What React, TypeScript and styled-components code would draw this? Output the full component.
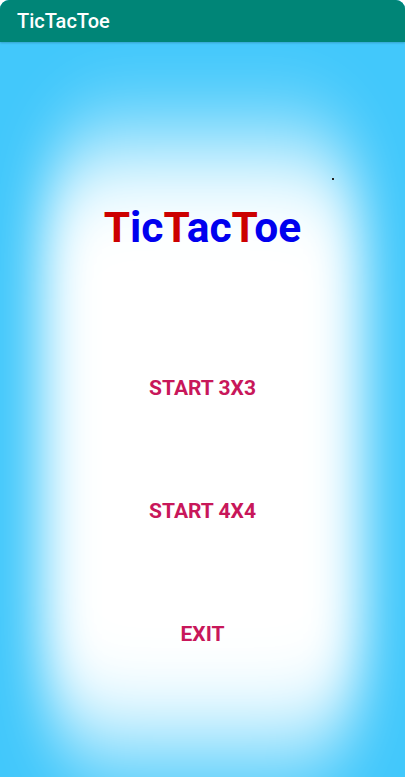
import React from "react";
import styled, { createGlobalStyle } from "styled-components";

const Global = createGlobalStyle`
  html, body { margin: 0; padding: 0; background: #ffffff; }
  body { font-family: Roboto, "Noto Sans", sans-serif; width: 405px; height: 777px; overflow: hidden; }
`;

const Screen = styled.div`
  width: 405px;
  height: 777px;
  display: flex;
  flex-direction: column;
  background: #42c8fb;
  border-radius: 9px 9px 0 0;
  overflow: hidden;
`;

const AppBar = styled.header`
  height: 42px;
  flex: none;
  background: #008577;
  display: flex;
  align-items: center;
  padding-left: 17px;
  color: #ffffff;
  font-size: 20px;
  font-weight: 500;
  box-shadow: 0 1px 2px rgba(0, 0, 0, 0.2);
  z-index: 2;
`;

const Main = styled.main`
  flex: 1;
  display: flex;
  flex-direction: column;
  align-items: center;
  padding-top: 162px;
  position: relative;

  /* soft white glow behind the menu (blurred rounded panel) */
  &::before {
    content: "";
    position: absolute;
    left: 42px;
    width: 321px;
    top: 98px;
    height: 304px;
    background: #ffffff;
    border-radius: 80px / 40px;
    filter: blur(25px);
    transform: scaleY(2);
    transform-origin: top center;
  }
`;

const Title = styled.h1`
  margin: 0;
  font-family: Roboto, sans-serif;
  font-weight: 700;
  font-size: 42.5px;
  line-height: 48px;
  white-space: nowrap;
  position: relative;
`;

const Letter = styled.span<{ $red?: boolean }>`
  color: ${(p) => (p.$red ? "#cc0000" : "#0000ee")};
`;

const MenuButton = styled.button<{ $gap: number }>`
  margin-top: ${(p) => p.$gap}px;
  background: none;
  border: none;
  padding: 0;
  font-family: Roboto, sans-serif;
  font-weight: 700;
  font-size: 21px;
  line-height: 24px;
  color: #c8175a;
  position: relative;
`;

const Dot = styled.div`
  position: absolute;
  width: 2px;
  height: 2px;
  background: #222;
  left: 332px;
  top: 136px;
`;

export default function App() {
  return (
    <>
      <Global />
      <Screen>
        <AppBar>TicTacToe</AppBar>
        <Main>
          <Dot />
          <Title>
            <Letter $red>T</Letter>
            <Letter>ic</Letter>
            <Letter $red>T</Letter>
            <Letter>ac</Letter>
            <Letter $red>T</Letter>
            <Letter>oe</Letter>
          </Title>
          <MenuButton $gap={124}>START 3X3</MenuButton>
          <MenuButton $gap={99}>START 4X4</MenuButton>
          <MenuButton $gap={99}>EXIT</MenuButton>
        </Main>
      </Screen>
    </>
  );
}
